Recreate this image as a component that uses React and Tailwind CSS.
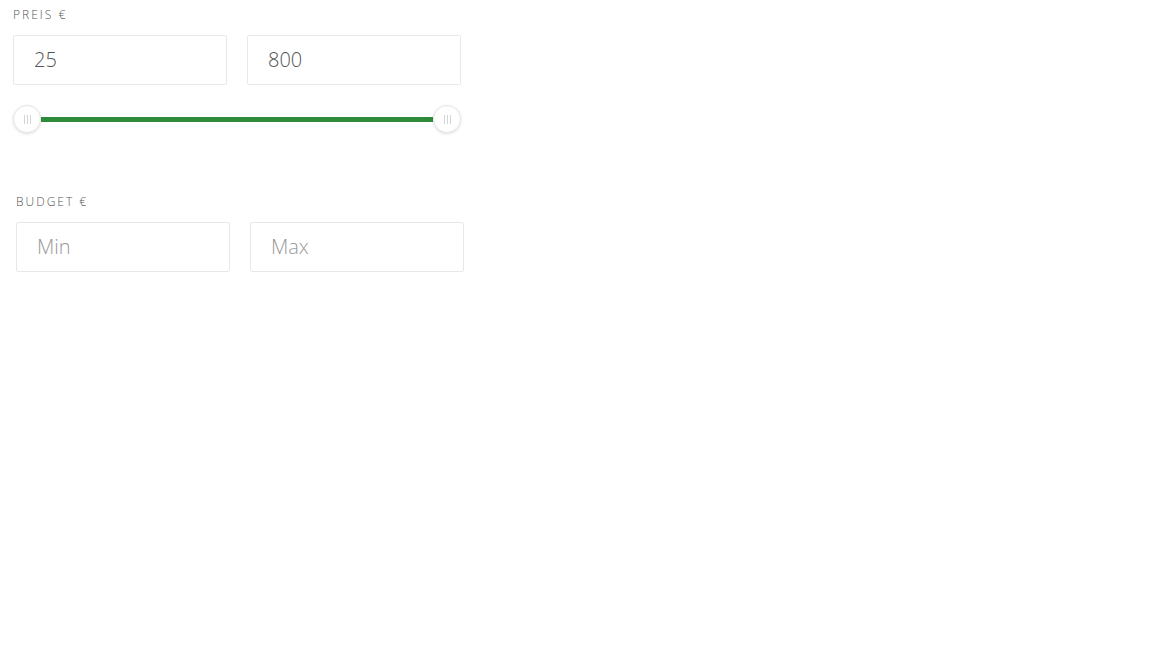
export default function App() {
  const font = { fontFamily: '"Open Sans", "Liberation Sans", sans-serif' };
  const Handle = () => (
    <div className="w-[28px] h-[28px] rounded-full bg-white border border-[#e6e6e6] shadow-[0_1px_3px_rgba(0,0,0,0.12)] flex items-center justify-center gap-[2px] shrink-0">
      <span className="w-px h-[9px] bg-[#d4d4d4]" />
      <span className="w-px h-[9px] bg-[#d4d4d4]" />
      <span className="w-px h-[9px] bg-[#d4d4d4]" />
    </div>
  );
  const inputCls =
    "w-[214px] h-[50px] border border-[#e8e8e8] rounded-[2px] px-[20px] pb-[2px] text-[20px] font-light text-[#555] placeholder:text-[#999] outline-none";
  return (
    <div className="w-[1152px] h-[648px] bg-white" style={font}>
      <div className="pt-[7px] pl-[13px] w-[461px]">
        <div className="text-[12px] leading-[16px] tracking-[2px] font-light text-[#555]">PREIS €</div>
        <div className="flex gap-[20px] mt-[12px]">
          <input defaultValue="25" className={inputCls} style={font} />
          <input defaultValue="800" className={inputCls} style={font} />
        </div>
        <div className="flex items-center mt-[20px] w-[448px]">
          <Handle />
          <div className="flex-1 h-[5px] bg-[#2e8b3c]" />
          <Handle />
        </div>
      </div>
      <div className="pl-[16px] mt-[61px] w-[464px]">
        <div className="text-[12px] leading-[16px] tracking-[2px] font-light text-[#555]">BUDGET €</div>
        <div className="flex gap-[20px] mt-[12px]">
          <input placeholder="Min" className={inputCls} style={font} />
          <input placeholder="Max" className={inputCls} style={font} />
        </div>
      </div>
    </div>
  );
}
